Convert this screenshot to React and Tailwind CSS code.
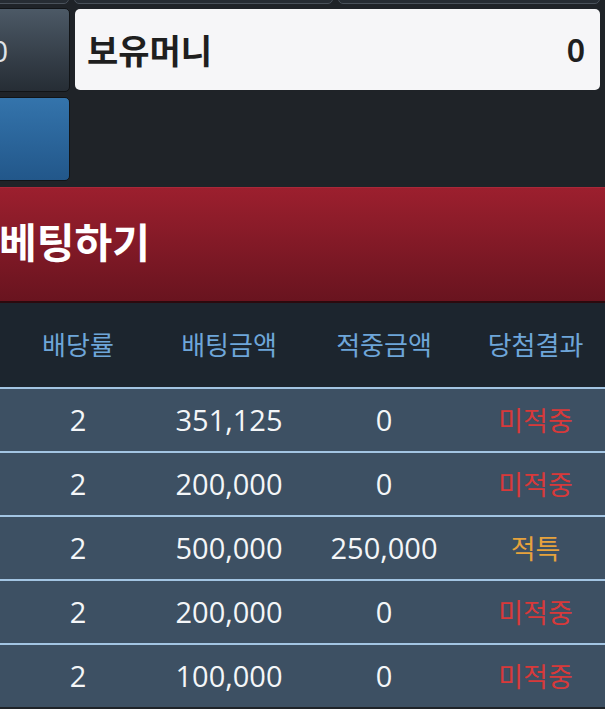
import React from 'react'

const rows = [
  { odds: '2', bet: '351,125', win: '0', result: '미적중' },
  { odds: '2', bet: '200,000', win: '0', result: '미적중' },
  { odds: '2', bet: '500,000', win: '250,000', result: '적특' },
  { odds: '2', bet: '200,000', win: '0', result: '미적중' },
  { odds: '2', bet: '100,000', win: '0', result: '미적중' },
]

const cols = 'grid grid-cols-[156px_146px_164px_139px]'
const num = "font-['Open_Sans','Noto_Sans_CJK_KR',sans-serif]"
const kr = "font-['Noto_Sans_CJK_KR',sans-serif]"

function ResultCell({ value }) {
  const color = value === '적특' ? 'text-[#e6a23c]' : 'text-[#d8393a]'
  return (
    <div className={`flex items-center justify-center text-[27px] ${kr} ${color}`}>
      {value}
    </div>
  )
}

export default function App() {
  return (
    <div className="flex h-[709px] w-[605px] flex-col overflow-hidden bg-[#1f2328]">
      {/* clipped top buttons */}
      <div className="flex h-[4px] items-end gap-[5px] overflow-hidden">
        <div className="-ml-[20px] h-[20px] w-[89px] shrink-0 rounded-[5px] border border-[#4a525b] bg-[#262c33]" />
        <div className="h-[20px] w-[259px] shrink-0 rounded-[5px] border border-[#4a525b] bg-[#262c33]" />
        <div className="h-[20px] w-[262px] shrink-0 rounded-[5px] border border-[#4a525b] bg-[#262c33]" />
      </div>

      <div className="mt-[4px] flex gap-[5px]">
        <div className="flex flex-col gap-[5px]">
          <div className="-ml-[30px] flex h-[84px] w-[100px] items-center rounded-[5px] border border-[#111417] bg-gradient-to-b from-[#4c5966] to-[#262d35] pl-[20px] font-['Open_Sans',sans-serif] text-[30px] text-[#dfe3e7]">
            0
          </div>
          <div className="-ml-[30px] h-[84px] w-[100px] rounded-[5px] border border-[#111417] bg-gradient-to-b from-[#3474ac] to-[#22578a]" />
        </div>
        <div className="mt-[1px] flex h-[81px] w-[525px] items-center justify-between rounded-[5px] bg-[#f6f6f8] pl-[12px] pr-[15px] text-[#1f1f1f]">
          <span className={`${kr} text-[34px] font-semibold`}>보유머니</span>
          <span className="font-['Noto_Sans',sans-serif] text-[32px] font-semibold">0</span>
        </div>
      </div>

      <div className="mt-[6px] flex h-[116px] items-center border-b-2 border-t border-b-[#2b0a0e] border-t-[#a8283a] bg-gradient-to-b from-[#9c1f2e] to-[#69141f] pb-[8px]">
        <span className={`-ml-[1px] ${kr} text-[41px] font-bold leading-none text-white`}>
          베팅하기
        </span>
      </div>

      <div className={`${cols} h-[84px] items-center bg-[#1c252e] pb-[3px] text-[26px] text-[#6ea6d9] ${kr}`}>
        <div className="text-center">배당률</div>
        <div className="text-center">배팅금액</div>
        <div className="text-center">적중금액</div>
        <div className="text-center">당첨결과</div>
      </div>

      <div className="flex flex-col">
        {rows.map((r, i) => (
          <div
            key={i}
            className={`${cols} h-[64px] border-t-2 border-[#a3c5e3] bg-[#3d5063] text-[#f4f6f8]`}
          >
            <div className={`flex items-center justify-center text-[29px] ${num}`}>{r.odds}</div>
            <div className={`flex items-center justify-center text-[29px] ${num}`}>{r.bet}</div>
            <div className={`flex items-center justify-center text-[29px] ${num}`}>{r.win}</div>
            <ResultCell value={r.result} />
          </div>
        ))}
      </div>
    </div>
  )
}
